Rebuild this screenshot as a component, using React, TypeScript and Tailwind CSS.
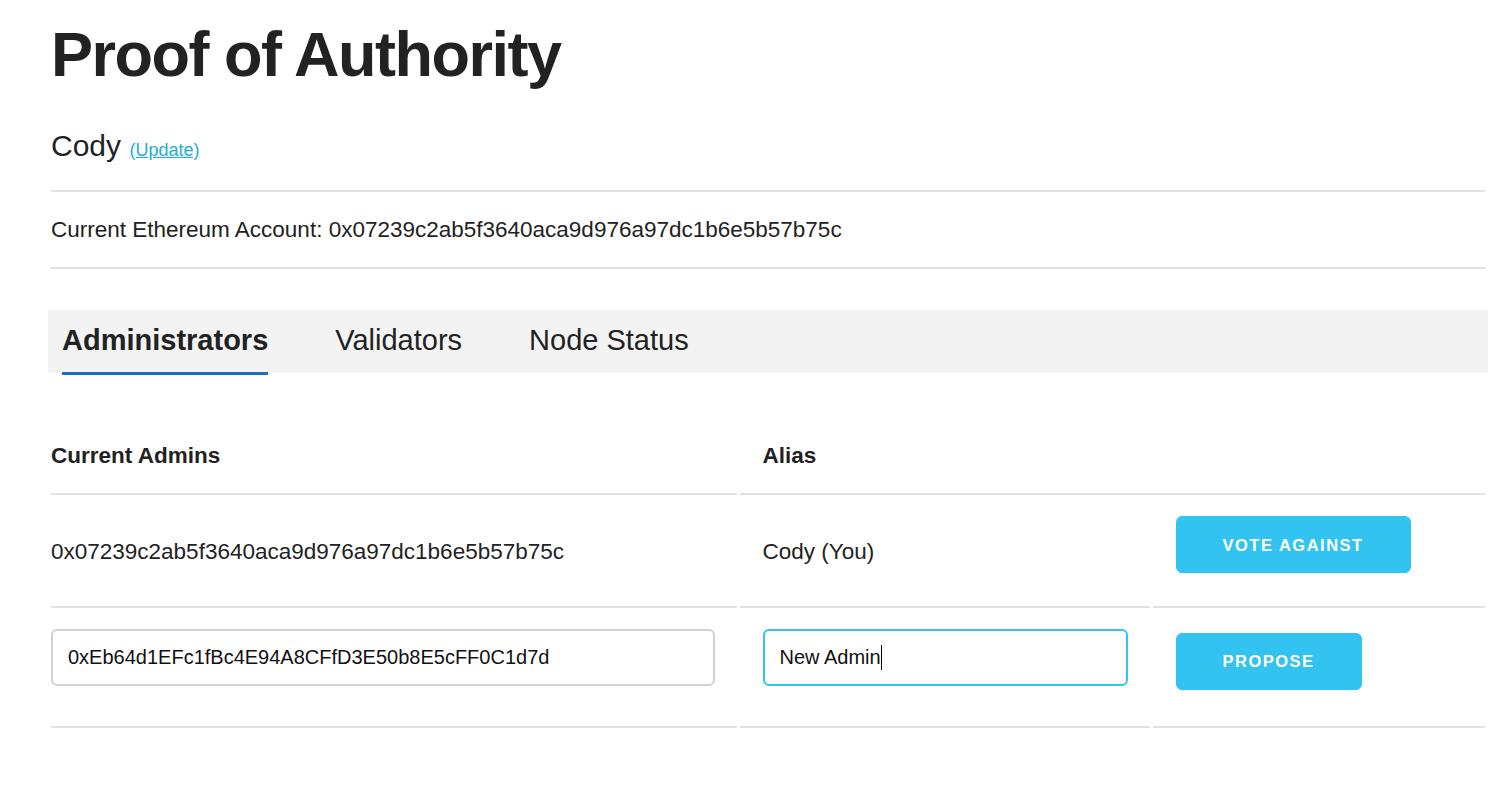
import React from "react";

const account = "0x07239c2ab5f3640aca9d976a97dc1b6e5b57b75c";

function Tabs() {
  const tabs = ["Administrators", "Validators", "Node Status"];
  return (
    <div className="flex h-[63px] items-start gap-[67px] bg-[#f3f3f3] pl-[14px]">
      {tabs.map((t, i) => (
        <div
          key={t}
          className={
            i === 0
              ? "h-[65px] border-b-[3px] border-[#1a6fc4] pt-[14px] text-[29px] leading-[32px] font-bold"
              : "h-[65px] pt-[14px] text-[29px] leading-[32px]"
          }
        >
          {t}
        </div>
      ))}
    </div>
  );
}

function AdminTable() {
  return (
    <table className="mt-[45px] w-[1440px] table-fixed border-separate border-spacing-[3px] text-[22.5px] leading-[36px]">
      <colgroup>
        <col className="w-[686px]" />
        <col className="w-[410px]" />
        <col className="w-[332px]" />
      </colgroup>
      <thead>
        <tr>
          <th className="border-b-2 border-[#e1e1e1] pt-[17px] pb-[19px] pr-[22.5px] text-left font-bold">
            Current Admins
          </th>
          <th colSpan={2} className="border-b-2 border-[#e1e1e1] pt-[17px] pb-[19px] pl-[22.5px] text-left font-bold">
            Alias
          </th>
        </tr>
      </thead>
      <tbody>
        <tr>
          <td className="border-b-2 border-[#e1e1e1] py-[18px] pr-[22.5px] align-middle">{account}</td>
          <td className="border-b-2 border-[#e1e1e1] py-[18px] px-[22.5px] align-middle">Cody (You)</td>
          <td className="border-b-2 border-[#e1e1e1] py-[18px] pl-[22.5px] align-middle">
            <button className="mb-[15px] block h-[57px] rounded-[6px] border-[1.5px] border-[#33c3f0] bg-[#33c3f0] px-[46px] text-[16.5px] font-bold tracking-[1.5px] text-white">
              VOTE AGAINST
            </button>
          </td>
        </tr>
        <tr>
          <td className="border-b-2 border-[#e1e1e1] py-[18px] pr-[22.5px] align-middle">
            <input
              readOnly
              value="0xEb64d1EFc1fBc4E94A8CFfD3E50b8E5cFF0C1d7d"
              className="mb-[22px] block h-[57px] w-full rounded-[6px] border-2 border-[#d1d1d1] bg-white px-[15px] text-[20px] text-[#111] outline-none"
            />
          </td>
          <td className="border-b-2 border-[#e1e1e1] py-[18px] px-[22.5px] align-middle">
            <div className="relative">
              <input
                readOnly
                value="New Admin"
                className="mb-[22px] block h-[57px] w-full rounded-[6px] border-2 border-[#33c3f0] bg-white px-[15px] text-[20px] text-[#111] outline-none"
              />
              <span className="absolute left-[118px] top-[16px] h-[25px] w-px bg-black" />
            </div>
          </td>
          <td className="border-b-2 border-[#e1e1e1] py-[18px] pl-[22.5px] align-middle">
            <button className="mb-[15px] block h-[57px] rounded-[6px] border-[1.5px] border-[#33c3f0] bg-[#33c3f0] px-[46px] text-[16.5px] font-bold tracking-[1.5px] text-white">
              PROPOSE
            </button>
          </td>
        </tr>
      </tbody>
    </table>
  );
}

export default function App() {
  return (
    <div className="min-h-screen bg-white font-['Liberation_Sans',Arial,sans-serif] text-[#222]">
      <div className="ml-[48px] w-[1440px] pt-[16px]">
        <div className="px-[3px]">
          <h1 className="mb-[30px] text-[63px] leading-[76px] font-bold tracking-[-1.5px]">Proof of Authority</h1>
          <div className="h-[48px] text-[30px] leading-[48px]">
            Cody{" "}
            <a href="#" className="text-[18px] leading-none text-[#1eaedb] underline">
              (Update)
            </a>
          </div>
          <hr className="mt-[20px] mb-[20px] border-t-2 border-[#e1e1e1]" />
          <div className="text-[22.5px] leading-[36px]">Current Ethereum Account: {account}</div>
          <hr className="mt-[19px] mb-[41px] border-t-2 border-[#e1e1e1]" />
        </div>
        <Tabs />
        <AdminTable />
      </div>
    </div>
  );
}
